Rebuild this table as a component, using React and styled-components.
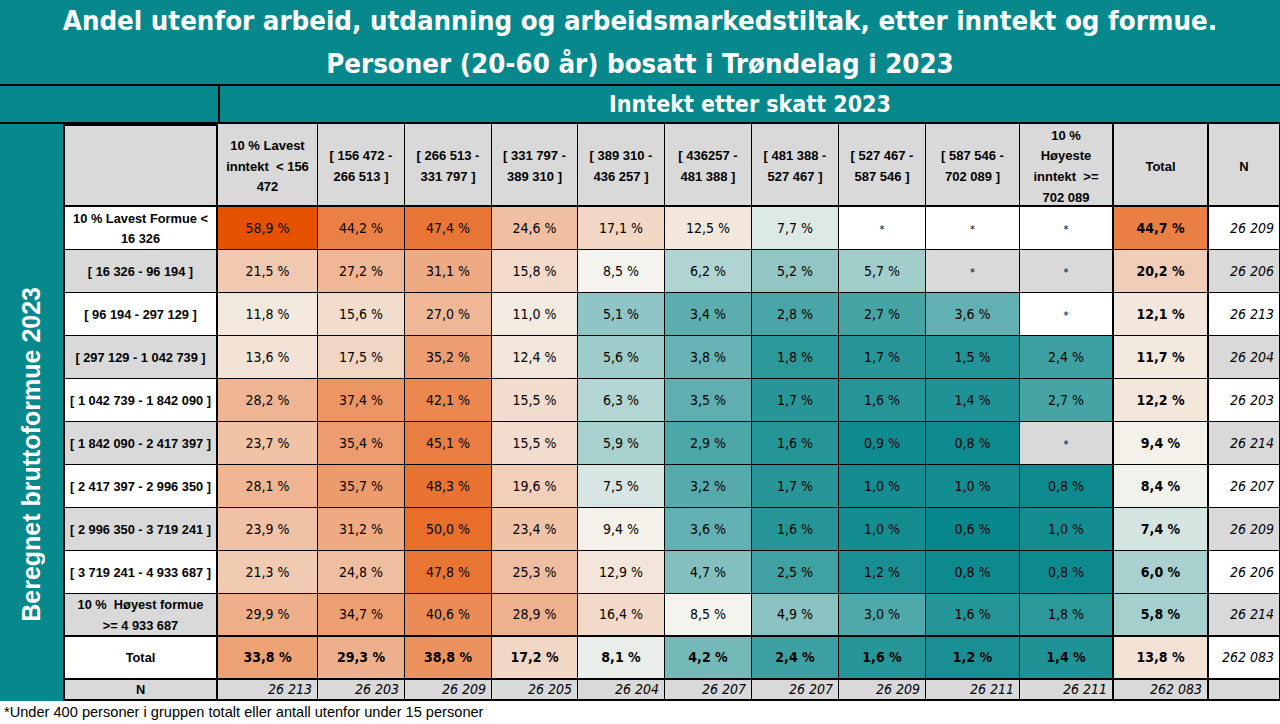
import React from 'react';
import styled, { createGlobalStyle } from 'styled-components';

const COND = '"DejaVu Sans Condensed", "DejaVu Sans", sans-serif';
const SANS = '"Liberation Sans", Arial, sans-serif';
const TEAL = '#07888c';
const GRAY = '#d9d9d9';

const GlobalStyle = createGlobalStyle`
  html, body {
    margin: 0;
    padding: 0;
    background: #fff;
  }
  body {
    font-family: ${SANS};
    color: #000;
  }
  * {
    box-sizing: border-box;
  }
`;

const COLS = [65, 153, 100, 87, 87, 86, 87, 87, 87, 87, 94, 94, 95, 71];

const Page = styled.div`
  width: 1280px;
  height: 724px;
  overflow: hidden;
  background: #fff;
`;

const TitleBar = styled.header`
  height: 86px;
  background: ${TEAL};
  border-bottom: 2px solid #000;
  display: flex;
  flex-direction: column;
  justify-content: center;
  align-items: center;
  color: #fff;
  font-family: ${COND};
  font-weight: bold;
  font-size: 27.4px;
  line-height: 43px;
`;

const Grid = styled.div`
  display: grid;
  grid-template-columns: ${COLS.map((c) => c + 'px').join(' ')};
  grid-template-rows: 38px 83px repeat(11, 43px) 21px;
`;

const Corner = styled.div`
  grid-column: 1 / 3;
  grid-row: 1;
  background: ${TEAL};
  border-bottom: 2px solid #000;
`;

const CornerSide = styled.div`
  grid-column: 1;
  grid-row: 2;
  background: ${TEAL};
  border-right: 2px solid #000;
`;

const Band = styled.div`
  grid-column: 3 / -1;
  grid-row: 1;
  background: ${TEAL};
  border-left: 2px solid #000;
  border-bottom: 2px solid #000;
  display: flex;
  align-items: center;
  justify-content: center;
  color: #fff;
  font-family: ${COND};
  font-weight: bold;
  font-size: 23px;
`;

const Side = styled.div`
  grid-column: 1;
  grid-row: 3 / -1;
  background: ${TEAL};
  border-right: 2px solid #000;
  display: flex;
  align-items: center;
  justify-content: center;
`;

const SideText = styled.span`
  writing-mode: vertical-rl;
  transform: rotate(180deg);
  color: #fff;
  font-family: ${SANS};
  font-weight: bold;
  font-size: 25px;
  white-space: nowrap;
`;

const Cell = styled.div`
  background: ${(p) => p.$bg || '#fff'};
  border-right: ${(p) => p.$br ?? 1}px solid #000;
  border-bottom: ${(p) => p.$bb ?? 1}px solid #000;
  display: flex;
  align-items: center;
  justify-content: ${(p) => (p.$right ? 'flex-end' : 'center')};
  padding: ${(p) => (p.$right ? '0 5px 0 2px' : '0 2px')};
  text-align: center;
  font-family: ${COND};
  font-size: 14px;
  font-weight: ${(p) => (p.$bold ? 'bold' : 'normal')};
  font-style: ${(p) => (p.$italic ? 'italic' : 'normal')};
  line-height: 20.5px;
  color: #000;
`;

const HeadCell = styled(Cell)`
  background: ${GRAY};
  padding-top: 5px;
  font-family: ${SANS};
  font-size: 13px;
  font-weight: bold;
  line-height: 20.7px;
`;

const LabelCell = styled(Cell)`
  padding-top: 2px;
  font-family: ${SANS};
  font-size: 12.8px;
  font-weight: bold;
  white-space: nowrap;
`;

const Star = styled.span`
  font-size: 11px;
  transform: translateY(2px);
`;

const Footnote = styled.div`
  height: 23px;
  padding: 3px 0 0 4px;
  font-family: ${SANS};
  font-size: 14.6px;
  color: #000;
`;

const HEAD = [
  ['10 % Lavest', 'inntekt  < 156', '472'],
  ['[ 156 472 -', '266 513 ]'],
  ['[ 266 513 -', '331 797 ]'],
  ['[ 331 797 -', '389 310 ]'],
  ['[ 389 310 -', '436 257 ]'],
  ['[ 436257 -', '481 388 ]'],
  ['[ 481 388 -', '527 467 ]'],
  ['[ 527 467 -', '587 546 ]'],
  ['[ 587 546 -', '702 089 ]'],
  ['10 %', 'Høyeste', 'inntekt  >=', '702 089'],
  ['Total'],
  ['N'],
];

const ROWS = [
  { label: ['10 % Lavest Formue <', '16 326'], v: [58.9, 44.2, 47.4, 24.6, 17.1, 12.5, 7.7, null, null, null], total: 44.7, n: '26 209' },
  { label: ['[ 16 326 - 96 194 ]'], v: [21.5, 27.2, 31.1, 15.8, 8.5, 6.2, 5.2, 5.7, null, null], total: 20.2, n: '26 206' },
  { label: ['[ 96 194 - 297 129 ]'], v: [11.8, 15.6, 27.0, 11.0, 5.1, 3.4, 2.8, 2.7, 3.6, null], total: 12.1, n: '26 213' },
  { label: ['[ 297 129 - 1 042 739 ]'], v: [13.6, 17.5, 35.2, 12.4, 5.6, 3.8, 1.8, 1.7, 1.5, 2.4], total: 11.7, n: '26 204' },
  { label: ['[ 1 042 739 - 1 842 090 ]'], v: [28.2, 37.4, 42.1, 15.5, 6.3, 3.5, 1.7, 1.6, 1.4, 2.7], total: 12.2, n: '26 203' },
  { label: ['[ 1 842 090 - 2 417 397 ]'], v: [23.7, 35.4, 45.1, 15.5, 5.9, 2.9, 1.6, 0.9, 0.8, null], total: 9.4, n: '26 214' },
  { label: ['[ 2 417 397 - 2 996 350 ]'], v: [28.1, 35.7, 48.3, 19.6, 7.5, 3.2, 1.7, 1.0, 1.0, 0.8], total: 8.4, n: '26 207' },
  { label: ['[ 2 996 350 - 3 719 241 ]'], v: [23.9, 31.2, 50.0, 23.4, 9.4, 3.6, 1.6, 1.0, 0.6, 1.0], total: 7.4, n: '26 209' },
  { label: ['[ 3 719 241 - 4 933 687 ]'], v: [21.3, 24.8, 47.8, 25.3, 12.9, 4.7, 2.5, 1.2, 0.8, 0.8], total: 6.0, n: '26 206' },
  { label: ['10 %  Høyest formue', '>= 4 933 687'], v: [29.9, 34.7, 40.6, 28.9, 16.4, 8.5, 4.9, 3.0, 1.6, 1.8], total: 5.8, n: '26 214' },
  { label: ['Total'], v: [33.8, 29.3, 38.8, 17.2, 8.1, 4.2, 2.4, 1.6, 1.2, 1.4], total: 13.8, n: '262 083', isTotal: true },
];

const N_ROW = ['26 213', '26 203', '26 209', '26 205', '26 204', '26 207', '26 207', '26 209', '26 211', '26 211', '262 083', ''];

// three-colour scale like the spreadsheet: teal (low) -> near white -> orange (high)
const LOW = [7, 135, 139];
const MID = [244, 243, 238];
const HIGH = [230, 81, 0];
const MIN = 0.6;
const MIDV = 8.45;
const MAX = 58.9;

const mix = (a, b, t) => a.map((x, i) => Math.round(x + (b[i] - x) * t));
const heat = (v) => {
  const c = v <= MIDV
    ? mix(LOW, MID, Math.max(0, (v - MIN) / (MIDV - MIN)))
    : mix(MID, HIGH, Math.min(1, (v - MIDV) / (MAX - MIDV)));
  return `rgb(${c.join(',')})`;
};

const pct = (v) => v.toFixed(1).replace('.', ',') + ' %';

const Lines = ({ lines }) => lines.map((l, i) => (
  <React.Fragment key={i}>
    {i > 0 && <br />}
    {l.replace(/ {2}/g, '\u00a0 ')}
  </React.Fragment>
));

// right border widths per column (label, c1..c10, total, n)
const brFor = (ci) => (ci === 0 || ci === 10 || ci === 11 ? 2 : 1);

export default function App() {
  return (
    <Page>
      <GlobalStyle />
      <TitleBar>
        <div>Andel utenfor arbeid, utdanning og arbeidsmarkedstiltak, etter inntekt og formue.</div>
        <div>Personer (20-60 år) bosatt i Trøndelag i 2023</div>
      </TitleBar>
      <Grid>
        <Corner />
        <Band>Inntekt etter skatt 2023</Band>
        <CornerSide />
        <Side>
          <SideText>Beregnet bruttoformue 2023</SideText>
        </Side>

        <HeadCell $br={2} $bb={2} style={{ borderTop: '2px solid #000' }} />
        {HEAD.map((h, i) => (
          <HeadCell key={i} $br={brFor(i + 1)} $bb={2}>
            <div><Lines lines={h} /></div>
          </HeadCell>
        ))}

        {ROWS.map((r, ri) => {
          const stripe = ri % 2 === 1 ? GRAY : '#fff';
          const bb = ri >= 9 ? 2 : 1;
          return (
            <React.Fragment key={ri}>
              <LabelCell $bg={stripe} $br={2} $bb={bb}>
                <div><Lines lines={r.label} /></div>
              </LabelCell>
              {r.v.map((v, ci) => (
                v === null ? (
                  <Cell key={ci} $bg={stripe} $br={brFor(ci + 1)} $bb={bb}>
                    <Star>*</Star>
                  </Cell>
                ) : (
                  <Cell key={ci} $br={brFor(ci + 1)} $bb={bb} $bold={r.isTotal} style={{ background: heat(v) }}>
                    {pct(v)}
                  </Cell>
                )
              ))}
              <Cell $br={2} $bb={bb} $bold style={{ background: heat(r.total) }}>
                {pct(r.total)}
              </Cell>
              <Cell $bg={stripe} $bb={bb} $italic $right>
                {r.n}
              </Cell>
            </React.Fragment>
          );
        })}

        <LabelCell $bg={GRAY} $br={2} $bb={2}>N</LabelCell>
        {N_ROW.map((n, i) => (
          <Cell key={i} $bg={GRAY} $italic $right $br={brFor(i + 1)} $bb={2}>
            {n}
          </Cell>
        ))}
      </Grid>
      <Footnote>*Under 400 personer i gruppen totalt eller antall utenfor under 15 personer</Footnote>
    </Page>
  );
}
